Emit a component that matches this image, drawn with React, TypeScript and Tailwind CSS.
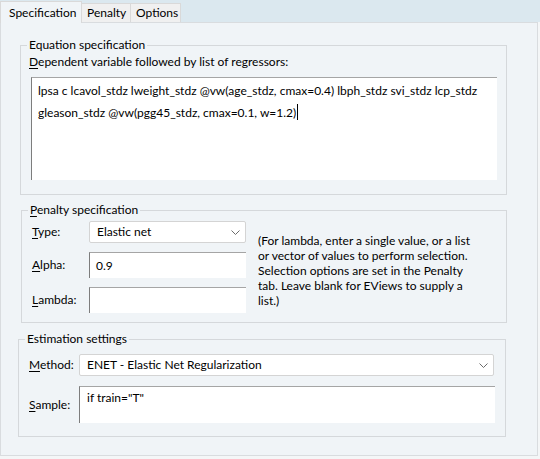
import type { ReactNode } from "react";

const FONT = "font-['Lato','Noto_Sans',sans-serif] text-[12px] leading-[16px] text-black";

// First letter underlined, like a Windows accelerator key
function Accel({ text }: { text: string }) {
  return (
    <span>
      <span className="underline underline-offset-2">{text[0]}</span>
      {text.slice(1)}
    </span>
  );
}

function Chevron() {
  return (
    <svg width="9" height="5" viewBox="0 0 9 5" className="shrink-0">
      <path d="M0.5 0.5 L4.5 4.5 L8.5 0.5" fill="none" stroke="#6b6b6b" strokeWidth="1" />
    </svg>
  );
}

function Combo({ value, className }: { value: string; className: string }) {
  return (
    <div
      className={`flex h-[22px] items-center justify-between rounded-[2px] border border-[#d4d4d4] bg-white pl-[7px] pr-[5px] ${className}`}
    >
      <span>{value}</span>
      <Chevron />
    </div>
  );
}

// Classic sunken edit box: darker top/left edge
function Edit({ className, children }: { className: string; children?: ReactNode }) {
  return (
    <div className={`border-l border-t border-l-[#7d7d7d] border-t-[#a5a5a5] bg-white ${className}`}>
      {children}
    </div>
  );
}

function Group({
  title,
  className,
  children,
}: {
  title: ReactNode;
  className: string;
  children: ReactNode;
}) {
  return (
    <fieldset className={`border border-[#d5d8db] ${className}`}>
      <legend className="ml-[6px] px-[2px]">{title}</legend>
      {children}
    </fieldset>
  );
}

export default function App() {
  return (
    <div className={`flex h-[459px] w-[540px] flex-col bg-[#dbe8ef] ${FONT}`}>
      {/* tab strip */}
      <div className="flex h-[22px] items-end">
        <div className="z-10 -mb-px flex h-[22px] w-[82px] items-center border-l border-r border-t border-[#d9d9d9] bg-[#f0f4f7] pl-[8px]">
          Specification
        </div>
        <div className="flex h-[19px] w-[49px] items-center border-r border-t border-[#d9d9d9] bg-[#f0f0f0] pl-[5px]">
          Penalty
        </div>
        <div className="flex h-[19px] w-[50px] items-center border-r border-t border-[#d9d9d9] bg-[#f0f0f0] pl-[5px]">
          Options
        </div>
      </div>

      <div className="flex flex-1 bg-[#f4f6f7] pb-[3px] pr-[2px]">
        <div className="flex flex-1 flex-col border border-[#d9dcdf] bg-[#f0f4f7]">
          <Group title="Equation specification" className="ml-[19px] mt-[14px] w-[487px] pb-[14px]">
            <div className="ml-[8px] mt-px">
              <Accel text="Dependent variable followed by list of regressors:" />
            </div>
            <Edit className="ml-[10px] mt-[7px] h-[103px] w-[466px] pl-[6px] pt-[3px]">
              <div className="leading-[20px]">
                lpsa c lcavol_stdz lweight_stdz @vw(age_stdz, cmax=0.4) lbph_stdz svi_stdz lcp_stdz
                <br />
                gleason_stdz @vw(pgg45_stdz, cmax=0.1, w=1.2)
                <span className="ml-px inline-block h-[16px] w-px translate-y-[3px] bg-black" />
              </div>
            </Edit>
          </Group>

          <Group
            title={<Accel text="Penalty specification" />}
            className="ml-[20px] mt-[7px] w-[486px] pb-[9px]"
          >
            <div className="flex pl-[10px] pt-[3px]">
              <div className="flex flex-col gap-[9px]">
                <div className="flex items-center">
                  <div className="w-[57px]">
                    <Accel text="Type:" />
                  </div>
                  <Combo value="Elastic net" className="w-[157px]" />
                </div>
                <div className="flex items-center">
                  <div className="w-[57px]">
                    <Accel text="Alpha:" />
                  </div>
                  <Edit className="flex h-[26px] w-[157px] items-center pl-[6px]">0.9</Edit>
                </div>
                <div className="flex items-center">
                  <div className="w-[57px]">
                    <Accel text="Lambda:" />
                  </div>
                  <Edit className="h-[26px] w-[157px]" />
                </div>
              </div>
              <p className="ml-[12px] mt-[12px] w-[218px] leading-[15px]">
                (For lambda, enter a single value, or a list or vector of values to perform selection.
                Selection options are set in the Penalty tab. Leave blank for EViews to supply a list.)
              </p>
            </div>
          </Group>

          <Group title="Estimation settings" className="ml-[17px] mt-[8px] w-[488px] pb-[13px]">
            <div className="flex flex-col gap-[10px] pl-[10px] pt-[7px]">
              <div className="flex items-center">
                <div className="w-[50px]">
                  <Accel text="Method:" />
                </div>
                <Combo value="ENET - Elastic Net Regularization" className="w-[415px]" />
              </div>
              <div className="flex items-center">
                <div className="w-[50px]">
                  <Accel text="Sample:" />
                </div>
                <Edit className="h-[37px] w-[416px] pl-[7px] pt-[3px]">if train="T"</Edit>
              </div>
            </div>
          </Group>
        </div>
      </div>
    </div>
  );
}
